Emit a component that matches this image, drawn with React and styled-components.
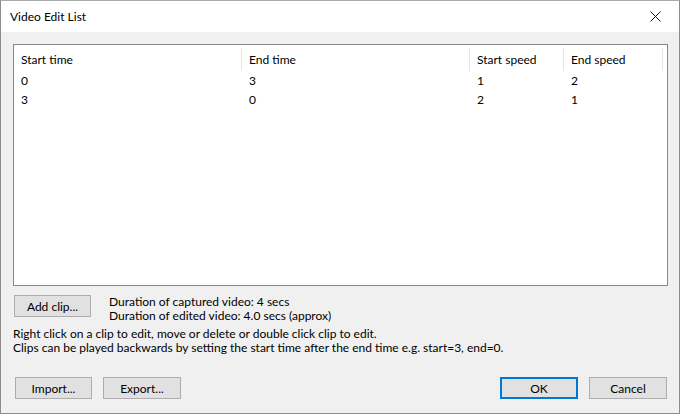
import React from 'react';
import styled, { createGlobalStyle } from 'styled-components';

const GlobalStyle = createGlobalStyle`
   * { box-sizing: border-box; }
   html, body { margin: 0; padding: 0; background: #ffffff; }
   body {
      font-family: "Segoe UI", Lato, sans-serif;
      font-size: 12px;
      color: #000;
   }
`

const columns = [
   { key: 'start', label: 'Start time', width: 228 },
   { key: 'end', label: 'End time', width: 228 },
   { key: 'startSpeed', label: 'Start speed', width: 94 },
   { key: 'endSpeed', label: 'End speed', width: 99 },
];

const clips = [
   { start: '0', end: '3', startSpeed: '1', endSpeed: '2' },
   { start: '3', end: '0', startSpeed: '2', endSpeed: '1' },
];

const CloseIcon = () => (
   <svg width="11" height="11" viewBox="0 0 11 11">
      <path d="M0.5 0.5 L10.5 10.5 M10.5 0.5 L0.5 10.5" stroke="#1a1a1a" strokeWidth="1" fill="none" />
   </svg>
);

const App = () => {
   return (
      <>
         <GlobalStyle />
         <Window>
            <TitleBar>
               <Title>Video Edit List</Title>
               <CloseButton><CloseIcon /></CloseButton>
            </TitleBar>
            <Body>
               <ListView>
                  <HeaderRow>
                     {columns.map(col => (
                        <HeaderCell key={col.key} $width={col.width}>{col.label}</HeaderCell>
                     ))}
                  </HeaderRow>
                  {clips.map((clip, i) => (
                     <Row key={i}>
                        {columns.map(col => (
                           <Cell key={col.key} $width={col.width}>{clip[col.key]}</Cell>
                        ))}
                     </Row>
                  ))}
               </ListView>
               <InfoRow>
                  <Button $width={77}>Add clip...</Button>
                  <Durations>
                     <div>Duration of captured video: 4 secs</div>
                     <div>Duration of edited video: 4.0 secs (approx)</div>
                  </Durations>
               </InfoRow>
               <Hints>
                  <div>Right click on a clip to edit, move or delete or double click clip to edit.</div>
                  <div>Clips can be played backwards by setting the start time after the end time e.g. start=3, end=0.</div>
               </Hints>
               <Footer>
                  <ButtonGroup>
                     <Button $width={77}>Import...</Button>
                     <Button>Export...</Button>
                  </ButtonGroup>
                  <ButtonGroup>
                     <Button $primary>OK</Button>
                     <Button>Cancel</Button>
                  </ButtonGroup>
               </Footer>
            </Body>
         </Window>
      </>
   );
}

const Window = styled.div`
   width: 680px;
   height: 414px;
   display: flex;
   flex-direction: column;
   background: #f0f0f0;
   border: 1px solid #8c8c8c;
   border-top-color: #aaaaaa;
`
const TitleBar = styled.div`
   flex: 0 0 31px;
   display: flex;
   align-items: center;
   justify-content: space-between;
   background: #ffffff;
   padding-left: 9px;
`
const Title = styled.div`
   font-size: 12px;
`
const CloseButton = styled.div`
   width: 46px;
   height: 31px;
   display: flex;
   align-items: center;
   justify-content: center;
   margin-right: 1px;
`
const Body = styled.div`
   flex: 1;
   display: flex;
   flex-direction: column;
   padding: 12px 11px 0 12px;
`
const ListView = styled.div`
   height: 242px;
   background: #ffffff;
   border: 1px solid #828790;
`
const HeaderRow = styled.div`
   display: flex;
   height: 26px;
   padding-top: 1px;
`
const HeaderCell = styled.div`
   flex: 0 0 ${p => p.$width}px;
   display: flex;
   align-items: center;
   padding-left: 7px;
   border-right: 1px solid #e5e5e5;
   margin-top: 2px;
`
const Row = styled.div`
   display: flex;
   height: 19px;
   align-items: center;
`
const Cell = styled.div`
   flex: 0 0 ${p => p.$width}px;
   padding-left: 7px;
`
const InfoRow = styled.div`
   display: flex;
   align-items: flex-start;
   margin-top: 9px;
   gap: 18px;
`
const Durations = styled.div`
   line-height: 14px;
`
const Hints = styled.div`
   line-height: 14px;
   margin-top: 4px;
`
const Footer = styled.div`
   display: flex;
   justify-content: space-between;
   margin-top: 22px;
   padding: 0 1px 0 1px;
`
const ButtonGroup = styled.div`
   display: flex;
   gap: 10px;
`
const Button = styled.div`
   width: ${p => p.$width || 78}px;
   height: 22px;
   display: flex;
   align-items: center;
   justify-content: center;
   background: #e1e1e1;
   border: ${p => p.$primary ? '2px solid #0078d7' : '1px solid #adadad'};
   margin-left: 1px;
   font-size: 12px;
`

export default App;
